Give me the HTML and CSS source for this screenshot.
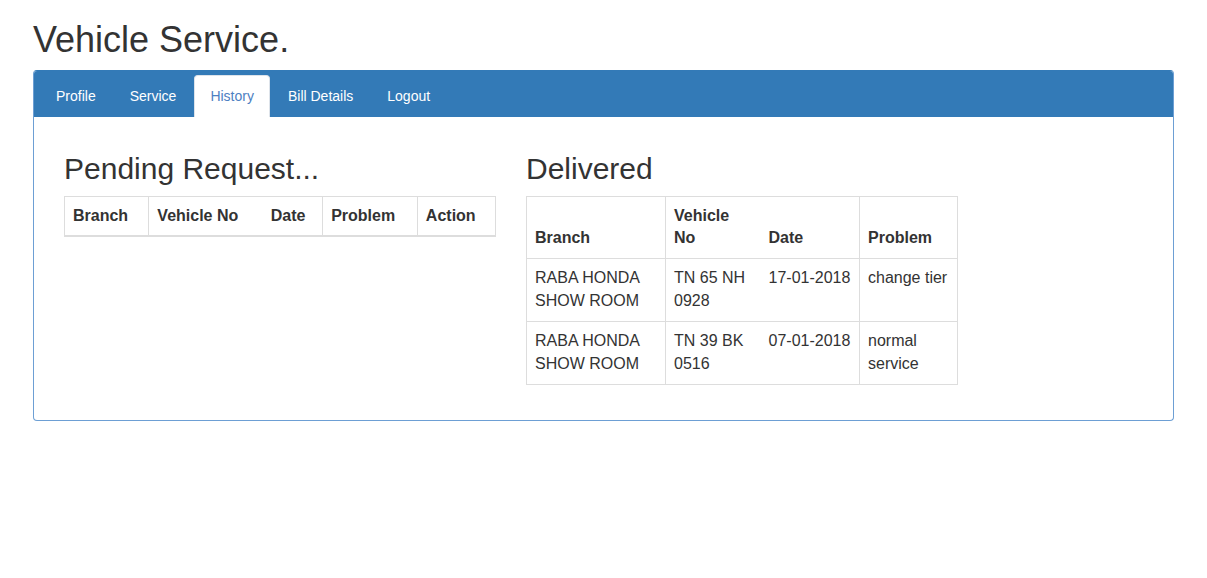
FILE: index.html
```html
<!DOCTYPE html>
<html>
<head>
<meta charset="utf-8">
<title>Vehicle Service</title>
<link rel="stylesheet" href="styles.css">
</head>
<body>
<div class="container">
  <h1 class="title">Vehicle Service.</h1>
  <div class="panel">
    <div class="panel-heading">
      <ul class="tabs">
        <li><a href="#">Profile</a></li>
        <li><a href="#">Service</a></li>
        <li class="active"><a href="#">History</a></li>
        <li><a href="#">Bill Details</a></li>
        <li><a href="#">Logout</a></li>
      </ul>
    </div>
    <div class="panel-body">
      <div class="col">
        <h2>Pending Request...</h2>
        <table class="tbl pending">
          <thead>
            <tr><th>Branch</th><th class="veh">Vehicle No</th><th class="date">Date</th><th>Problem</th><th>Action</th></tr>
          </thead>
        </table>
      </div>
      <div class="col">
        <h2>Delivered</h2>
        <table class="tbl delivered">
          <tbody>
            <tr class="head"><th class="c1">Branch</th><th class="veh c2">Vehicle No</th><th class="date c3">Date</th><th class="c4">Problem</th></tr>
            <tr><td>RABA HONDA SHOW ROOM</td><td class="veh">TN 65 NH 0928</td><td class="date">17-01-2018</td><td>change tier</td></tr>
            <tr><td>RABA HONDA SHOW ROOM</td><td class="veh">TN 39 BK 0516</td><td class="date">07-01-2018</td><td>normal service</td></tr>
          </tbody>
        </table>
      </div>
    </div>
  </div>
</div>
</body>
</html>
```
FILE: styles.css
```css
* { box-sizing: border-box; }
html, body { margin: 0; padding: 0; }
body {
  font-family: "Liberation Sans", Arial, Helvetica, sans-serif;
  font-size: 16px;
  line-height: 1.42857;
  color: #333;
  background: #fff;
}
.container {
  width: 1171px;
  margin: 0 auto;
  padding: 0 15px;
}
.title {
  font-size: 36px;
  font-weight: 500;
  line-height: 1.1;
  margin: 20px 0 10px;
}
.panel {
  border: 1px solid #6d9fd4;
  border-top-color: #337ab7;
  border-radius: 4px;
  margin-bottom: 20px;
}
.panel-heading {
  background: #337ab7;
  padding: 4px 6px 0;
  border-radius: 3px 3px 0 0;
}
.tabs {
  list-style: none;
  margin: 0;
  padding: 0;
  display: flex;
}
.tabs li { margin-right: 2px; }
.tabs a {
  display: block;
  padding: 10px 15px;
  font-size: 14px;
  line-height: 20px;
  color: #fff;
  text-decoration: none;
  border: 1px solid transparent;
  border-bottom: 0;
  border-radius: 4px 4px 0 0;
}
.tabs .active a {
  background: #fff;
  color: #4d80c2;
  border-color: #dde3ea;
  padding-bottom: 11px;
}
.panel-body {
  display: flex;
  gap: 30px;
  padding: 15px 30px 15px 30px;
}
.col { width: 432px; }
h2 {
  font-size: 30px;
  font-weight: 500;
  line-height: 1.1;
  margin: 20px 0 11px;
}
.tbl {
  width: 100%;
  border-collapse: collapse;
  margin-bottom: 20px;
  border: 1px solid #ddd;
}
.tbl th, .tbl td {
  border: 1px solid #ddd;
  padding: 8px;
  text-align: left;
  vertical-align: top;
}
.tbl th { font-weight: bold; vertical-align: bottom; }
.pending thead th { border-bottom: 2px solid #ddd; }
.tbl .date { border-left-style: hidden; }
.delivered .c1 { width: 139px; }
.delivered .c2 { width: 95px; }
.delivered .c3 { width: 99px; }
```
